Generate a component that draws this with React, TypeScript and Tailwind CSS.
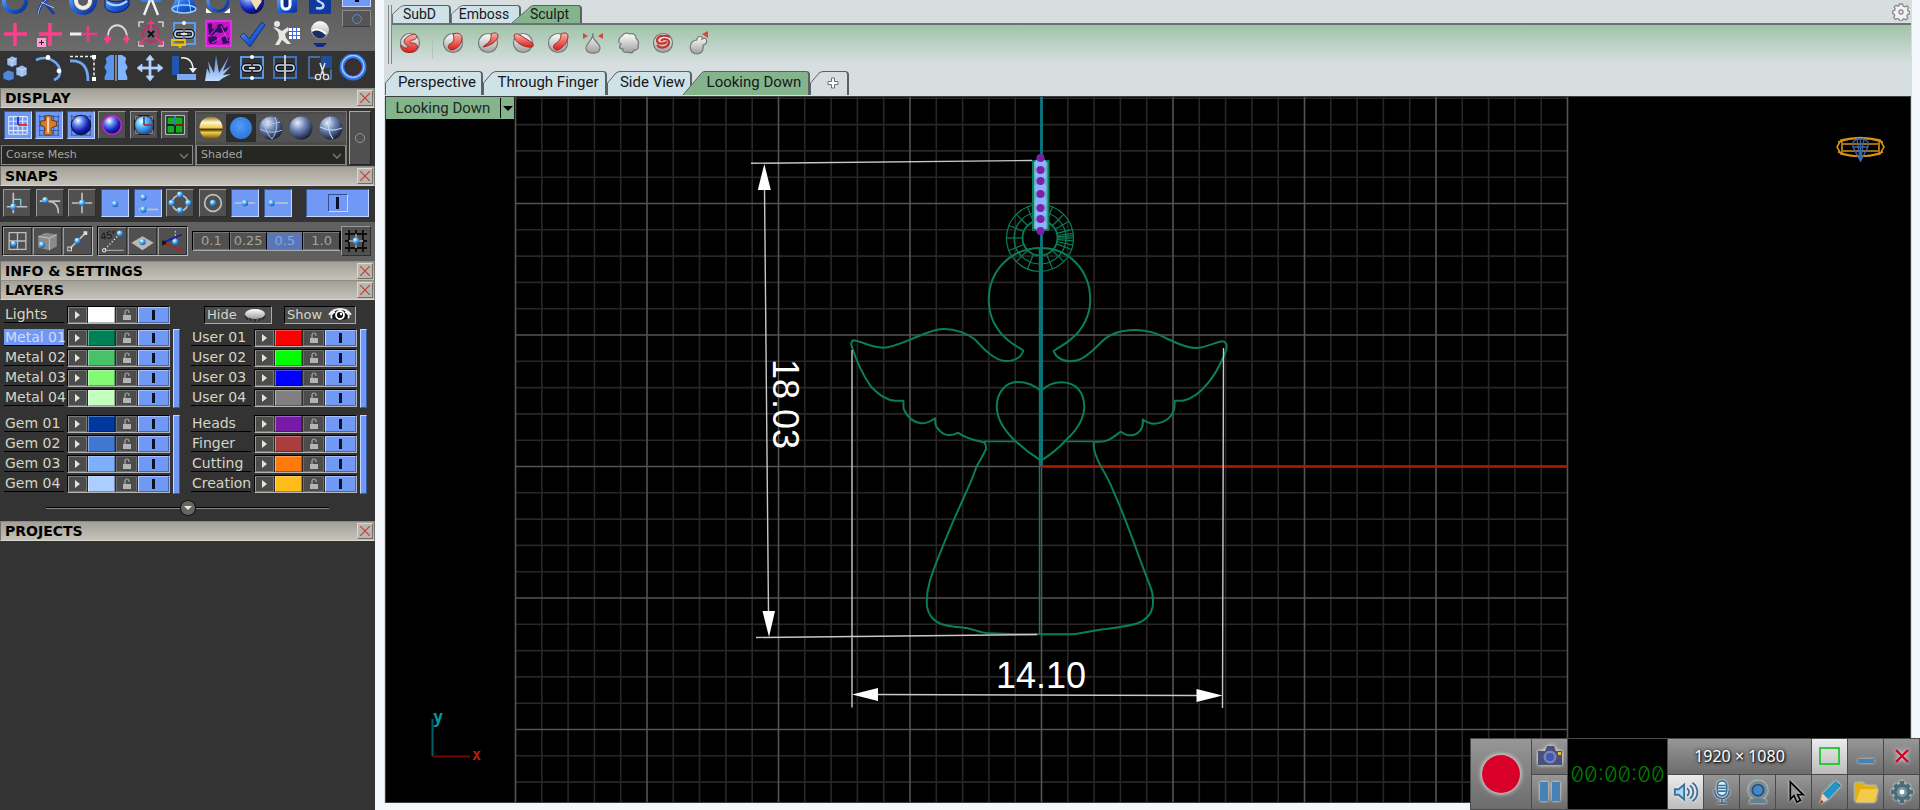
import type { ReactNode } from 'react';
import clsx from 'clsx';

const BALL = 'url(#ball)';

/* Shared gradients, referenced by id from every icon */
function Defs() {
  return (
    <svg className="absolute h-0 w-0" aria-hidden="true">
      <defs>
        <radialGradient id="ball" cx="35%" cy="30%" r="75%">
          <stop offset="0" stopColor="#fff" />
          <stop offset="0.4" stopColor="#58bdf5" />
          <stop offset="1" stopColor="#1450b8" />
        </radialGradient>
        <radialGradient id="navy" cx="35%" cy="28%" r="80%">
          <stop offset="0" stopColor="#fff" />
          <stop offset="0.3" stopColor="#6a8cf0" />
          <stop offset="0.65" stopColor="#1522b8" />
          <stop offset="1" stopColor="#02064a" />
        </radialGradient>
        <radialGradient id="steel" cx="35%" cy="28%" r="75%">
          <stop offset="0" stopColor="#e8f0ff" />
          <stop offset="0.45" stopColor="#6f86b4" />
          <stop offset="1" stopColor="#16203a" />
        </radialGradient>
        <radialGradient id="flat" cx="45%" cy="40%" r="65%">
          <stop offset="0" stopColor="#4f9dfa" />
          <stop offset="1" stopColor="#2c72d8" />
        </radialGradient>
        <linearGradient id="gold" x1="0" y1="0" x2="0" y2="1">
          <stop offset="0" stopColor="#8a6a10" />
          <stop offset="0.25" stopColor="#fff7d0" />
          <stop offset="0.5" stopColor="#f0c840" />
          <stop offset="0.55" stopColor="#3a2a04" />
          <stop offset="0.7" stopColor="#f4cd4c" />
          <stop offset="1" stopColor="#5c430a" />
        </linearGradient>
        <linearGradient id="blue" x1="0" y1="0" x2="1" y2="1">
          <stop offset="0" stopColor="#79b4ff" />
          <stop offset="0.5" stopColor="#1f63e0" />
          <stop offset="1" stopColor="#0a2a90" />
        </linearGradient>
        <linearGradient id="ice" x1="0" y1="0" x2="0" y2="1">
          <stop offset="0" stopColor="#4f86dc" />
          <stop offset="1" stopColor="#c4dcff" />
        </linearGradient>
        <linearGradient id="pearl" x1="0" y1="0" x2="0" y2="1">
          <stop offset="0" stopColor="#fff" />
          <stop offset="1" stopColor="#9e9e9e" />
        </linearGradient>
        <linearGradient id="red" x1="0" y1="0" x2="0" y2="1">
          <stop offset="0" stopColor="#f7b6b2" />
          <stop offset="1" stopColor="#e01c14" />
        </linearGradient>
      </defs>
    </svg>
  );
}

function Icon({ size = 'h-7 w-7', children }: { size?: string; children: ReactNode }) {
  return (
    <svg viewBox="0 0 28 28" fill="none" className={clsx('block shrink-0', size)} aria-hidden="true">
      {children}
    </svg>
  );
}

const Link = ({ gap = false }: { gap?: boolean }) => (
  <g stroke="#0c1420" strokeWidth="4">
    <path d="M13 11H8a3 3 0 0 0 0 6h5M15 11h5a3 3 0 0 1 0 6h-5" />
    <path d="M13 11H8a3 3 0 0 0 0 6h5M15 11h5a3 3 0 0 1 0 6h-5" stroke="#c9d6ea" strokeWidth="1.6" />
    {!gap && <path d="M11 14h6" stroke="#fff" strokeWidth="1.6" />}
  </g>
);

const topIcons: [string, ReactNode][] = [
  ['Circle', <circle cx="14" cy="13" r="11" stroke="url(#blue)" strokeWidth="4" />],
  ['Curve', <g><path d="M3 26C5 16 9 10 26 6M6 14l6 3 7 9M12 4l8 8" stroke="#1d3f98" strokeWidth="3" /><path d="M3 26C5 16 9 10 26 6M6 14l13 6" stroke="#a9c6ff" /></g>],
  ['Rings', <g><circle cx="14" cy="13" r="12" stroke="url(#blue)" strokeWidth="4" /><circle cx="14" cy="13" r="7" stroke="#eee" strokeWidth="4" /></g>],
  ['Band', <g><path d="M2 10v9c3 8 21 7 24-2v-9c-4 7-18 8-24 2z" fill="url(#blue)" stroke="#0a1f5a" /><path d="M4 14c5 5 14 4 20-1" stroke="#bcd8ff" strokeWidth="2" /></g>],
  ['Compass', <g><path d="M2 8h24l-2 6H4z" fill="#2f7fe8" /><path d="M13 12 7 27M15 12l6 15" stroke="#f3f3f3" strokeWidth="2.4" /></g>],
  ['Loft', <g><path d="M7 8h14l6 13c-3 6-23 6-26 0z" fill="url(#blue)" /><ellipse cx="14" cy="21" rx="12" ry="4" stroke="#8fd0ff" strokeWidth="1.5" /><path d="m10 8-3 16M18 8l3 16" stroke="#8fd0ff" /></g>],
  ['Scale', <g><circle cx="14" cy="13" r="10" stroke="url(#blue)" strokeWidth="3" /><path d="M2 20v5h6zM26 20v5h-6z" fill="#fff" /></g>],
  ['Gem', <g><circle cx="14" cy="14" r="12" fill="url(#navy)" /><path d="m12 11 6-3 6 5-6 9z" fill="#f5ddb0" /></g>],
  ['Cutter', <g><path d="M5 4h17l3 3v17l-4 1H5z" fill="url(#blue)" /><rect x="10" y="7" width="8" height="14" rx="4" stroke="#fff" strokeWidth="3" fill="#0c2a80" /></g>],
  ['Sizer', <g><path d="M3 4h17l5 3v19H3z" fill="#11389c" /><path d="M18 10c-7-4-9 2-4 4s5 8-4 6" stroke="#bed7ff" strokeWidth="2.4" /></g>],
];

const midIcons: [string, ReactNode][] = [
  ['Point', <path d="M14 3v23M3 14h23" stroke="#ff3d8c" strokeWidth="3.6" />],
  ['Add point', <g><path d="M15 3v23M4 14h23" stroke="#ff3d8c" strokeWidth="3.6" /><rect x="2" y="18" width="9" height="9" fill="#ff9fd4" /><path d="M6.5 20v5M4 22.5h5" stroke="#222" /></g>],
  ['Remove point', <g><path d="M1 14h12" stroke="#eee" strokeWidth="3" /><path d="M19 6v16M12 14h16" stroke="#e83d80" strokeWidth="2.6" /></g>],
  ['Arc points', <g><path d="M5 18C4 1 24 1 24 18" stroke="#ddd" strokeWidth="1.8" /><path d="M4.5 15v8M1 19h7M23.5 15v8M20 19h7" stroke="#ff3d8c" strokeWidth="2.4" /></g>],
  ['Explode', <g><path d="M2 7V2h5M21 2h5v5M2 21v5h5M26 21v5h-5" stroke="#ccc" strokeWidth="1.6" /><circle cx="14" cy="14" r="8" stroke="#c8286c" strokeWidth="2" /><path d="M14 14V4M14 14 4 22M14 14l10 8" stroke="#e83d80" strokeWidth="1.6" /><path d="M10 4l4-4 4 4zM2 20v5l5-1zM26 20v5l-5-1z" fill="#e83d80" /><path d="m11 11 6 6M17 11l-6 6" stroke="#111" strokeWidth="2" /></g>],
  ['Link history', <g><rect x="4" y="3" width="21" height="21" stroke="#5ba2ff" strokeWidth="1.8" /><Link /><path d="M2 20h13v5H2zM8 25l3 3" stroke="#f0c000" strokeWidth="1.8" /><circle cx="14" cy="3" r="2" fill="#fff" /></g>],
  ['Pattern', <g><rect x="2" y="1" width="25" height="25" fill="#c315c6" stroke="#f62cf6" strokeWidth="1.6" /><path d="M4 4c3-2 5 0 4 3s3 2 5-1 5-3 6 0 3 2 5 0l-1 5-6 2-5-1-3 3-4 1zM4 17c4 0 8-2 9 1s-1 6-5 6-3-3-4-7zM17 17c5-3 5 2 8 1v5l-6 1z" fill="#30105c" /><path d="m5 16 8-9M17 6l7 15M8 23l13-8" stroke="#f62cf6" /></g>],
  ['Check', <path d="m2 16 4-3 5 6L24 2l3 3-15 22z" fill="url(#blue)" stroke="#0c2668" strokeWidth="0.8" />],
  ['Render', <g><circle cx="5" cy="4" r="3" fill="#e8e6e0" /><path d="m1 7 4 1 5 3 6-4 1 3-4 4 1 4 5 6h-4l-5-4-3 5H3l4-7-1-6z" fill="#e8e6e0" /><rect x="17" y="8" width="11" height="11" fill="#fff" /><path d="M17 11.5h11M17 15.5h11M20.500 8v11M24.500 8v11" stroke="#3b6ad8" /></g>],
  ['Ring preview', <g><circle cx="14" cy="10" r="9" fill="url(#pearl)" /><path d="M6 12c3-4 9-3 14 3-3 5-11 5-14-3z" fill="#1d2c60" /><path d="M6 11c4-3 10-1 14 3" stroke="#fff" strokeWidth="2" /><path d="M7 23h14l-4 4h-6z" fill="#112a88" /></g>],
];

const editIcons: [string, ReactNode][] = [
  ['Boxes', <g stroke="#1c2c4c" strokeWidth="0.6"><path d="m6 5 5-3 5 2v7l-5 2-5-2zM15 14l6-3 5 3v7l-5 2-6-2z" fill="#9fbce8" /><path d="m2 19 5-3 6 2v7l-5 2-6-2z" fill="#5285d8" /><path d="m6 5 5 2 5-3M11 7v6M15 14l6 2 5-2M21 16v7" stroke="#dce9ff" /></g>],
  ['Arc', <g><path d="M1 6c12-6 24 3 24 12 0 3-1 6-6 8" stroke="#6ea8f2" strokeWidth="2.6" /><circle cx="13" cy="3.5" r="2.4" fill="#fff" /><circle cx="24" cy="17" r="2.4" fill="#fff" /></g>],
  ['Fillet', <g><path d="M1 7c14-1 18 8 18 20" stroke="#6ea8f2" strokeWidth="2.8" /><path d="M1 2.5h24V26" stroke="#eee" strokeWidth="1.5" strokeDasharray="3 2" /><rect x="23" y="1" width="4" height="4" fill="#fff" /><rect x="23" y="23" width="4" height="4" fill="#fff" /></g>],
  ['Mirror', <g><path d="M12 1 8 1 5 3c-3 2 1 4-1 7s-2 4 0 6-3 7-1 10h9z" fill="#5a94ec" /><path d="m16 1 4 0 3 2c3 2-1 4 1 7s2 4 0 6 3 7 1 10h-9z" fill="#7fb4ff" /><path d="M14 1v26" stroke="#aaa" strokeWidth="1.4" /></g>],
  ['Move', <path d="m14 1 4 5h-3v7h7v-3l5 4-5 4v-3h-7v7h3l-4 5-4-5h3v-7H6v3l-5-4 5-4v3h7V6h-3z" fill="#b8d6ff" stroke="#a6ccff" strokeWidth="0.8" />],
  ['Rotate', <g><path d="M2 2h7v19H2z" fill="#2056b0" /><path d="M7 20h19v6H7z" fill="#79aaf2" /><path d="M11 4c8-1 12 4 12 12" stroke="#eee" strokeWidth="1.5" /><path d="M19 14h8l-4 5z" fill="#eee" /></g>],
  ['Scatter', <path d="M1 27 3 14l3 6-2-13 6 12 2-18 3 18L25 2l-6 15 8-5-8 9 8-1-8 4-4 3z" fill="url(#ice)" />],
  ['Linked', <g><rect x="3" y="3" width="22" height="21" stroke="#5ba2ff" strokeWidth="1.8" /><Link /><circle cx="14" cy="3" r="2" fill="#fff" /><circle cx="14" cy="24" r="2" fill="#fff" /></g>],
  ['Unlinked', <g><rect x="3" y="3" width="22" height="21" stroke="#3f7ad0" strokeWidth="1.8" /><Link gap /><path d="M14 1v26" stroke="#fff" strokeWidth="1.4" /></g>],
  ['Trim', <g><path d="M16 2h11v12H16z" fill="#1f4d9a" /><path d="M15 3H4v21h8M26 15v10h-3" stroke="#4d83cc" strokeWidth="1.4" /><path d="m15 9 4 12M20 9l-4 12" stroke="#ddd" strokeWidth="1.6" /><circle cx="13" cy="23" r="2.6" stroke="#ddd" strokeWidth="1.4" /><circle cx="21" cy="23" r="2.6" stroke="#ddd" strokeWidth="1.4" /></g>],
  ['Torus', <g><circle cx="14" cy="13" r="11" stroke="#2f72e0" strokeWidth="5" /><circle cx="14" cy="12.5" r="11" stroke="#9cc6ff" strokeWidth="1.4" /><circle cx="14" cy="13" r="8" stroke="#5c1220" /></g>],
];

const gridLines = <path d="M3 5h22M3 10h22M3 15h22M3 20h22M3 25h22M4 3v22M9 3v22M14 3v22M19 3v22M24 3v22" stroke="#27488c" strokeWidth="0.8" />;

const displayIcons: { name: string; on?: boolean; art: ReactNode }[] = [
  { name: 'Grid', on: true, art: <g><path d="M4 5h20M4 10h20M4 15h20M4 20h20M4 24h20M4 5v19M9 5v19M14 5v19M19 5v19M24 5v19" stroke="#dfe6f8" strokeWidth="1.2" /><path d="M14 5v9" stroke="#1818e0" strokeWidth="1.8" /><path d="M14 14h10" stroke="#e01818" strokeWidth="1.8" /></g> },
  { name: 'Profile', on: true, art: <g>{gridLines}<path d="M10 4h7v5l5 1v5l-5 2-1 2 2 4-3 2h-4l-3-2 2-4-1-3-4-2v-4l5-1z" fill="#d87c2c" stroke="#6a3408" /><path d="M13 6v16" stroke="#ffdca8" strokeWidth="2" /></g> },
  { name: 'Shade on grid', on: true, art: <g>{gridLines}<circle cx="14" cy="14" r="10.5" fill="url(#navy)" stroke="#111" /></g> },
  { name: 'Shade', art: <circle cx="14" cy="14" r="10" fill="url(#navy)" stroke="#d21ad8" strokeWidth="1.6" /> },
  { name: 'Extents', art: <g><path d="M4 8V4h4M20 4h4v4M24 20v4h-4M8 24H4v-4" stroke="#ddd" strokeWidth="1.8" /><rect x="4" y="4" width="20" height="20" stroke="#111" /><circle cx="14" cy="14" r="9.5" fill="url(#ball)" /><path d="M14 14V5" stroke="#11306a" strokeWidth="1.4" /><path d="M14 14h9" stroke="#c41a1a" strokeWidth="1.6" /></g> },
  { name: 'Views', art: <g><rect x="4" y="4" width="20" height="20" fill="#1a1a1a" stroke="#ddd" /><path d="M6 6h7v7H6zM15 6h7v7h-7zM6 15h7v7H6zM15 15h7v7h-7z" fill="#10b020" /><path d="M14 14V4" stroke="#48a8ff" strokeWidth="1.4" /><path d="M14 14h10" stroke="#c41a1a" strokeWidth="1.4" /></g> },
];

const shadeIcons: { name: string; on?: boolean; art: ReactNode }[] = [
  { name: 'Gold', art: <circle cx="14" cy="14" r="11.5" fill="url(#gold)" /> },
  { name: 'Flat', on: true, art: <circle cx="14" cy="14" r="11" fill="url(#flat)" /> },
  { name: 'Wire', art: <g><circle cx="14" cy="14" r="11.5" fill="url(#steel)" /><path d="M3 15c8 4 15 4 22 1M9 4c-2 8 0 15 6 21M18 3c3 7 2 15-3 22M5 8c6 2 12 2 18 0" stroke="#b4c4e0" /></g> },
  { name: 'Steel', art: <circle cx="14" cy="14" r="11.5" fill="url(#steel)" /> },
  { name: 'Steel wire', art: <g><circle cx="14" cy="14" r="11.5" fill="url(#steel)" /><path d="M3 13c8 4 15 4 22 1M13 3c-3 8-2 15 3 22" stroke="#c8d6f0" strokeWidth="1.2" /></g> },
];

const dot = (x: number, y: number) => <circle key={`${x}-${y}`} cx={x} cy={y} r="3.4" fill={BALL} />;
const wire = { stroke: '#c0c0bc', strokeWidth: 1.8 };

const snapIcons: { name: string; on?: boolean; art: ReactNode }[] = [
  { name: 'Perp', art: <g><path d="M10 3v22M3 18h22" {...wire} /><path d="M10 10h8v7" stroke="#6fd8e8" strokeWidth="1.4" />{dot(10, 18)}</g> },
  { name: 'Tan', art: <g><path d="M3 12h22M10 12c9 0 13 5 13 13" {...wire} />{dot(9, 11)}</g> },
  { name: 'Int', art: <g><path d="M14 3v22M3 14h22" {...wire} />{dot(14, 14)}</g> },
  { name: 'Point', on: true, art: dot(14, 15) },
  { name: 'Knot', on: true, art: <g><path d="M4 21h21" {...wire} />{dot(9, 8)}{dot(9, 21)}</g> },
  { name: 'Quad', art: <g><circle cx="14" cy="14" r="8.5" {...wire} />{dot(14, 5)}{dot(14, 22)}{dot(5, 14)}{dot(23, 14)}</g> },
  { name: 'Center', art: <g><circle cx="14" cy="14" r="9" {...wire} />{dot(14, 14)}</g> },
  { name: 'Mid', on: true, art: <g><path d="M3 14h22" {...wire} />{dot(14, 14)}</g> },
  { name: 'End', on: true, art: <g><path d="M6 14h19" {...wire} />{dot(7, 14)}</g> },
];

const osnapA: [string, ReactNode][] = [
  ['Grid snap', <g><path d="M5 5h18v18H5zM14 5v18M5 14h18" {...wire} strokeWidth="1.4" />{dot(10, 17)}</g>],
  ['Solid snap', <g><path d="m4 9 8-4 12 2v13l-8 4-12-3z" fill="#8a8a88" /><path d="m4 9 12 2 8-4M16 11v13" stroke="#c8c8c4" />{dot(8, 18)}</g>],
  ['Line snap', <g><path d="M6 22 22 6" {...wire} /><rect x="3.5" y="20.5" width="4" height="4" stroke="#ddd" /><rect x="20.5" y="3.5" width="4" height="4" fill="#ddd" />{dot(14, 14)}</g>],
];

const osnapB: [string, ReactNode][] = [
  ['Angle snap', <g><text x="2" y="13" fontSize="11" fill="#111" transform="rotate(-10 2 13)" className="font-['Liberation_Sans']">45°</text><path d="M6 23 22 6" stroke="#ddd" strokeWidth="1.4" strokeDasharray="1.500 2" /><path d="M6 24h20" stroke="#bbb" />{dot(22, 6)}<circle cx="5" cy="24" r="1.8" stroke="#fff" /></g>],
  ['Planar', <g><path d="m2 16 12-7 12 7-12 8z" fill="#b8b8b4" />{dot(14, 15)}</g>],
  ['Project', <g><path d="M17 3v9" stroke="#ddd" strokeDasharray="2 1.5" /><path d="m3 16 21-9" stroke="#1520b0" strokeWidth="2" /><path d="m3 16 21 8" stroke="#c81414" strokeWidth="2" strokeDasharray="3 1" /><path d="M3 13v6l5-3z" fill="#111" />{dot(17, 15)}</g>],
];

function IconButton({ name, on, className, children }: { name: string; on?: boolean; className?: string; children: ReactNode }) {
  return (
    <button
      aria-label={name}
      aria-pressed={!!on}
      className={clsx(
        'shrink-0 border',
        on ? 'border-b-[#c5d6ff] border-r-[#c5d6ff] border-l-[#3c5a9c] border-t-[#3c5a9c] bg-[#7099f6]' : 'border-b-[#2e2e2e] border-r-[#2e2e2e] border-l-[#9a9a9a] border-t-[#9a9a9a] bg-[#505050]',
        className,
      )}
    >
      {children}
    </button>
  );
}

function SectionHeader({ title }: { title: string }) {
  return (
    <div className="flex h-5 shrink-0 items-center justify-between border border-l-[#74736c] border-t-[#8e8d84] border-r-[#74736c] border-b-[#d8d7ce] bg-linear-to-b from-[#a3a197] to-[#c4c2b9] pl-1 pr-px">
      <h2 className="font-['DejaVu_Sans'] text-sm/4 font-bold text-black">{title}</h2>
      <button aria-label={`Close ${title}`} className="flex h-4 w-4 items-center justify-center border border-b-[#6e6d66] border-r-[#6e6d66] border-l-[#dcdbd2] border-t-[#dcdbd2] bg-[#b9b7ad]">
        <svg viewBox="0 0 10 10" className="h-2.5 w-2.5" stroke="#c43c3c" strokeWidth="1.2"><path d="m0 0 10 10M10 0 0 10" /></svg>
      </button>
    </div>
  );
}

function Dropdown({ label, value }: { label: string; value: string }) {
  return (
    <div className="relative h-5">
      <select aria-label={label} className="block h-5 w-full appearance-none border border-[#8a8a86] border-t-[#777] bg-[#262622] pl-1 font-['DejaVu_Sans'] text-[11px] text-[#a5a5a0]">
        <option>{value}</option>
      </select>
      <svg viewBox="0 0 10 6" fill="none" className="pointer-events-none absolute right-1 top-2 h-1.5 w-2.5" stroke="#777" strokeWidth="1.5"><path d="m1 1 4 4 4-4" /></svg>
    </div>
  );
}

type Layer = { name: string; color: string };

const leftGroups: Layer[][] = [
  [
    { name: 'Metal 01', color: '#008055' },
    { name: 'Metal 02', color: '#47c268' },
    { name: 'Metal 03', color: '#83fa76' },
    { name: 'Metal 04', color: '#c3ffbd' },
  ],
  [
    { name: 'Gem 01', color: '#00389f' },
    { name: 'Gem 02', color: '#4178cf' },
    { name: 'Gem 03', color: '#7db0f8' },
    { name: 'Gem 04', color: '#accdff' },
  ],
];

const rightGroups: Layer[][] = [
  [
    { name: 'User 01', color: '#ff0000' },
    { name: 'User 02', color: '#00ff00' },
    { name: 'User 03', color: '#0000ff' },
    { name: 'User 04', color: '#808080' },
  ],
  [
    { name: 'Heads', color: '#781aa8' },
    { name: 'Finger', color: '#aa3e3e' },
    { name: 'Cutting', color: '#ff7a0a' },
    { name: 'Creation', color: '#ffba1c' },
  ],
];

function LayerRow({ layer, active }: { layer: Layer; active?: boolean }) {
  return (
    <div className="flex h-5 items-start">
      <button className={clsx("mr-[3px] h-[17px] w-[60px] whitespace-nowrap border-b border-black pl-px text-left font-['DejaVu_Sans'] text-sm/4", active ? 'bg-[#7099f6] text-[#cfdcf6]' : 'text-[#d6d5c6]')}>
        {layer.name}
      </button>
      <div className="flex h-[18px] w-[103px] gap-px border border-black border-b-[#b5b5b5] border-r-[#b5b5b5] bg-[#2a2a2a]">
        <button aria-label={`${layer.name} material`} className="flex w-[19px] items-center justify-center border border-[#777] border-l-[#999] bg-[#4c4c4c]">
          <svg viewBox="0 0 5 8" className="h-2 w-[5px]"><path d="M0 0v8l5-4z" fill="#e8e4d4" /></svg>
        </button>
        <button aria-label={`${layer.name} colour`} className="w-[27px] border border-black/30 border-l-white/40 border-t-white/30" style={{ backgroundColor: layer.color }} />
        <button aria-label={`Lock ${layer.name}`} className="flex w-[21px] items-center justify-center border border-[#6e6e6e] bg-[#4c4c4c]">
          <svg viewBox="0 0 10 12" className="h-3 w-2.5"><path d="M3 6V3a2 2 0 0 1 4 0v1" fill="none" stroke="#aaa" strokeWidth="1.2" /><path d="M1 6h8v5H1z" fill="#b4b4b4" /></svg>
        </button>
        <button aria-label={`Show ${layer.name}`} aria-pressed="true" className="flex flex-1 items-center justify-center border border-[#4a68ac] border-l-[#c9d9ff] border-t-[#a9c2ff] bg-[#7099f6]">
          <span className="h-2.5 w-[3px] bg-[#0c1226]" />
        </button>
      </div>
    </div>
  );
}

function LayerGroup({ layers, active }: { layers: Layer[]; active?: string }) {
  return (
    <div className="flex gap-[3px]">
      <div>
        {layers.map((l) => <LayerRow key={l.name} layer={l} active={l.name === active} />)}
      </div>
      <button aria-label="Toggle group" className="h-[79px] w-[7px] border border-l-[#c5d6ff] border-t-[#c5d6ff] border-b-[#3c5a9c] border-r-[#3c5a9c] bg-[#7099f6]" />
    </div>
  );
}

function Sidebar() {
  return (
    <aside className="flex w-[375px] shrink-0 flex-col overflow-hidden bg-[#333]">
      <div className="flex h-[51px] shrink-0 overflow-hidden bg-linear-to-b from-[#5c5c5c] to-[#6b6b6b]">
        <div className="w-[334px] pl-px">
          <div className="flex h-[18px] items-end justify-between pb-0.5">
            {topIcons.map(([name, art]) => <button key={name} aria-label={name}><Icon>{art}</Icon></button>)}
          </div>
          <div className="flex h-8 items-center justify-between">
            {midIcons.map(([name, art]) => <button key={name} aria-label={name}><Icon>{art}</Icon></button>)}
          </div>
        </div>
        <div className="ml-2 flex w-[29px] flex-col gap-[3px]">
          <button aria-label="Pin" className="flex h-[7px] justify-center border border-t-0 border-[#c5d6ff] bg-[#7099f6]"><span className="h-0.5 w-1 bg-black" /></button>
          <button aria-label="Dock" className="flex h-[17px] items-center justify-center border border-[#8c8c8c] border-b-[#3a3a3a] bg-[#555]"><span className="h-2.5 w-2.5 rounded-full border border-[#5e8ccc]" /></button>
        </div>
      </div>
      <div className="flex h-[37px] shrink-0 items-start justify-between pl-px pr-2 pt-[3px]">
        {editIcons.map(([name, art]) => <button key={name} aria-label={name}><Icon>{art}</Icon></button>)}
      </div>

      <SectionHeader title="DISPLAY" />
      <div className="flex h-[58px] shrink-0 gap-0.5 pl-px pr-1 pt-[3px]">
        <div className="flex w-[192px] flex-col justify-between pb-px">
          <div className="flex justify-between pl-[3px] pr-1">
            {displayIcons.map((d) => <IconButton key={d.name} name={d.name} on={d.on} className="h-7 w-7"><Icon size="h-[26px] w-[26px]">{d.art}</Icon></IconButton>)}
          </div>
          <Dropdown label="Mesh quality" value="Coarse Mesh" />
        </div>
        <div className="flex w-[152px] flex-col justify-between border border-b-0 border-[#777] bg-[#4a4a4a] pb-px">
          <div className="flex justify-between pt-0.5">
            {shadeIcons.map((d) => <button key={d.name} aria-label={d.name} className={clsx('h-7 w-[30px] pl-px', d.on ? 'bg-[#2c2c2c]' : 'bg-[#525252]')}><Icon>{d.art}</Icon></button>)}
          </div>
          <Dropdown label="Display mode" value="Shaded" />
        </div>
        <button aria-label="Display options" className="mb-px flex w-[22px] items-center justify-center border border-l-[#aaa] border-t-[#aaa] border-b-[#222] border-r-[#222] bg-[#505050]">
          <span className="h-2.5 w-2.5 rounded-full border border-[#999]" />
        </button>
      </div>

      <SectionHeader title="SNAPS" />
      <div className="flex h-9 shrink-0 items-center justify-between pb-0.5 pl-[3px] pr-1.5">
        <div className="flex w-[289px] justify-between">
          {snapIcons.map((d) => <IconButton key={d.name} name={d.name} on={d.on} className="h-7 w-7"><Icon size="h-[26px] w-[26px]">{d.art}</Icon></IconButton>)}
        </div>
        <IconButton name="Snaps on" on className="flex h-7 w-[63px] items-center justify-center">
          <span className="flex h-[18px] w-5 items-center justify-center border border-[#35508c] border-b-[#c5d6ff] border-r-[#c5d6ff]"><span className="h-3 w-[3px] bg-[#0c1226]" /></span>
        </IconButton>
      </div>
      <div className="flex h-[39px] shrink-0 items-center gap-1 bg-[#606060] pb-0.5 pl-0.5">
        <div className="flex gap-px border border-black border-b-[#bbb] border-r-[#bbb]">
          {osnapA.map(([name, art]) => <IconButton key={name} name={name} className="h-7 w-[29px]"><Icon size="h-[26px] w-[27px]">{art}</Icon></IconButton>)}
        </div>
        <div className="flex gap-px border border-black border-b-[#bbb] border-r-[#bbb]">
          {osnapB.map(([name, art]) => <IconButton key={name} name={name} className="h-7 w-[29px]"><Icon size="h-[26px] w-[27px]">{art}</Icon></IconButton>)}
        </div>
        <div className="flex flex-1 items-center pr-1">
          <div className="grid h-5 flex-1 grid-cols-4 border border-black border-b-[#aaa] font-['DejaVu_Sans'] text-[13px]/4 text-[#a5a498]">
            {['0.1', '0.25', '0.5', '1.0'].map((v) => (
              <button key={v} className={clsx('border border-[#777] border-r-black', v === '0.5' ? 'bg-[#5876b8] text-[#8ba4dc]' : 'bg-[#505050]')}>{v}</button>
            ))}
          </div>
          <IconButton name="Grid step" className="h-[30px] w-[30px]">
            <Icon><path d="M7 3v22M14 3v22M21 3v22M3 7h22M3 14h22M3 21h22" stroke="#0d0d0d" strokeWidth="1.8" /><path d="M14 7v14M7 14h14" stroke="#bbb" strokeWidth="1.4" />{dot(14, 14)}</Icon>
          </IconButton>
        </div>
      </div>

      <div className="flex shrink-0 flex-col -space-y-px">
        <SectionHeader title="INFO & SETTINGS" />
        <SectionHeader title="LAYERS" />
      </div>
      <div className="shrink-0 pl-1 pt-1.5">
        <div className="flex h-[23px] items-start justify-between pr-[19px]">
          <LayerRow layer={{ name: 'Lights', color: '#ffffff' }} />
          <div className="flex gap-3 font-['DejaVu_Sans'] text-[13px]/4 text-[#d6d5c6]">
            <button className="flex h-[18px] w-[68px] items-center gap-1.5 border border-[#aaa] border-l-black border-t-black bg-[#4c4c4c] pl-0.5">
              Hide
              <svg viewBox="0 0 24 14" className="h-3.5 w-6"><path d="m2 8 3 4M7 10l1 3M12 11v3M17 10l-1 3M22 8l-3 4" stroke="#111" /><ellipse cx="12" cy="6" rx="10" ry="5" fill="url(#pearl)" /></svg>
            </button>
            <button className="flex h-[18px] w-[72px] items-center gap-1.5 border border-[#aaa] border-l-black border-t-black bg-[#4c4c4c] pl-0.5">
              Show
              <svg viewBox="0 0 24 14" className="h-3.5 w-6"><path d="M1 7c5-8 17-8 22 0-5 7-17 7-22 0z" fill="#111" /><path d="M1 7c5-8 17-8 22 0M4 10C2 8 4 5 7 4M20 10c2-2 0-5-3-6" fill="none" stroke="#eee" strokeWidth="1.8" /><circle cx="12" cy="7" r="4" fill="#111" stroke="#fff" strokeWidth="1.8" /><circle cx="13" cy="6" r="1.2" fill="#fff" /></svg>
            </button>
          </div>
        </div>
        <div className="flex gap-[11px]">
          <div className="flex flex-col gap-1.5">
            {leftGroups.map((g) => <LayerGroup key={g[0].name} layers={g} active="Metal 01" />)}
          </div>
          <div className="flex flex-col gap-1.5">
            {rightGroups.map((g) => <LayerGroup key={g[0].name} layers={g} />)}
          </div>
        </div>
        <div className="flex h-[26px] items-center pl-[42px] pr-[46px]">
          <div className="h-0.5 flex-1 border-b border-[#888] bg-black" />
          <button aria-label="Collapse layers" className="flex h-4 w-4 items-center justify-center rounded-full border border-[#111] bg-[#666]">
            <svg viewBox="0 0 8 4" className="h-1 w-2"><path d="M0 0h8L4 4z" fill="#eee8d4" /></svg>
          </button>
          <div className="h-0.5 flex-1 border-b border-[#888] bg-black" />
        </div>
      </div>
      <SectionHeader title="PROJECTS" />
    </aside>
  );
}

/* A tab with a slanted left edge; the active one runs over its neighbour */
function Tab({ label, active, className, children }: { label: string; active?: boolean; className: string; children?: ReactNode }) {
  const fill = active ? '#84b48c' : children ? '#d6dee0' : '#cfe2e8';
  const edge = active ? 'M-9 24 10 1.500Q11 .5 14 .5' : 'M.5 24V12L9 2Q11 .5 14 .5';
  return (
    <button role="tab" aria-selected={!!active} aria-label={label} className={clsx('relative flex shrink-0 items-center justify-center', className, active && 'z-10')}>
      <span className={clsx('absolute inset-y-0 left-3 right-0 rounded-tr border-r-2 border-t border-[#5c6264]', active ? 'bg-[#84b48c]' : children ? 'bg-[#d6dee0]' : 'bg-[#cfe2e8]')} />
      <svg viewBox="0 0 14 24" preserveAspectRatio="none" className="absolute left-0 top-0 h-full w-3.5 overflow-visible" aria-hidden="true">
        <path d={`${edge}V24z`} fill={fill} />
        <path d={edge} fill="none" stroke="#5c6264" />
      </svg>
      <span className="relative text-[#16181c]">{children ?? label}</span>
    </button>
  );
}

const ring = <circle cx="12" cy="12" r="9.5" fill="url(#pearl)" stroke="#777" strokeWidth="1.2" />;
const redStroke = { fill: 'url(#red)', stroke: '#8c2824', strokeWidth: 0.9 };

const sculptTools: [string, ReactNode][] = [
  ['Grab', <g>{ring}<path d="M17 3c3 2 2 5-2 6-5 1-4 3 0 3 6 1 6 7 0 9C7 23 2 19 3 14c4 5 9 3 6 0-5-2-4-9 8-11z" {...redStroke} /></g>],
  ['Inflate', <g>{ring}<path d="M12 3c5-2 9 0 9 4 0 6-5 11-10 12-4 0-5-5-2-6s5-4 3-10z" {...redStroke} /></g>],
  ['Crease', <g>{ring}<path d="M15 3c4-2 7-1 7 2 0 5-8 10-15 11 4-4 9-5 8-13z" {...redStroke} /></g>],
  ['Flatten', <g>{ring}<path d="M3 4c2-2 4-1 6 0l11 7c3 2 3 4 1 5-7 1-18-4-18-12z" {...redStroke} /></g>],
  ['Smooth', <g>{ring}<path d="M15 3c4-2 7-1 7 2 0 6-5 12-10 14-4 1-6-4-3-6s6-4 6-10z" {...redStroke} /></g>],
  ['Pinch', <g><path d="M12 2v3c0 5 7 7 7 12 0 7-14 7-14 0C5 12 12 10 12 2z" fill="url(#pearl)" stroke="#777" strokeWidth="1.2" /><path d="m2 2 5 3-5 3zM22 2l-5 3 5 3z" fill="#d84840" /></g>],
  ['Noise', <path d="M6 5c2-4 6-3 8-2 3-1 6 1 6 4 3 3 3 5 2 7 1 3-1 6-4 5-1 4-5 3-6 2-3 1-6 0-5-3-4 0-4-3-2-5-4-1-2-7 1-8z" fill="url(#pearl)" stroke="#777" strokeWidth="1.2" />],
  ['Twist', <g>{ring}<path d="M19 6c-5-2-12-2-13 3 0 5 7 4 10 2M6 14c4 5 12 2 12-3 0-3-6-4-8-1" fill="none" stroke="#c2342c" strokeWidth="2.2" /></g>],
  ['Pull', <g><path d="M11 9c0-5 7-4 5-1 6-3 6 5 1 6 1 7-3 9-6 9-9 0-9-14 0-14z" fill="url(#pearl)" stroke="#777" strokeWidth="1.2" /><path d="m16 3 6-3v7z" fill="#d84840" /></g>],
];

function Ribbon() {
  return (
    <div className="flex h-[66px] shrink-0 pl-[3px] pt-[5px]">
      <div className="h-[59px] w-1 shrink-0 border-x border-[#7e8688]" />
      <div className="flex min-w-0 flex-1 flex-col">
        <div className="flex h-[18px] items-end justify-between pr-px">
          <div role="tablist" className="flex font-[Roboto] text-sm/4">
            <Tab label="SubD" className="h-[18px] w-[59px] pr-1" />
            <Tab label="Emboss" className="h-[18px] w-[70px] pr-1" />
            <Tab label="Sculpt" active className="h-[18px] w-[61px] pr-1" />
          </div>
          <button aria-label="Toolbar options" className="mb-0.5">
            <svg viewBox="0 0 18 18" fill="none" stroke="#8a8a8a" strokeWidth="1.3" className="h-[18px] w-[18px]"><path d="M7.5 1h3l.5 2 2 .8 2-1 1.500 2-1 2 .5 1.200 1.500.5v2.500l-2 .5-.7 1.500 1 2-2 1.800-2-1-1 .5-.8 1.700H7.800l-.8-2-1.500-.5-2 1-1.800-2 1-1.800-.5-1.500-1.500-.7V8l2-.7.5-1.500-1-2 1.800-1.600 2 1 1-.5z" fill="#f2f2f2" /><circle cx="9" cy="9" r="2" /></svg>
          </button>
        </div>
        <div className="flex h-10 items-start border-t-2 border-[#6d7375] bg-linear-to-b from-[#9fc4a8] to-[#d6dee0] pl-1.5 pt-1.5">
          <button aria-label={sculptTools[0][0]}><svg viewBox="0 0 24 24" className="h-6 w-6">{sculptTools[0][1]}</svg></button>
          <div className="ml-2.5 mr-2 h-7 w-px bg-[#b3c4b8]" />
          <div className="flex gap-[11px]">
            {sculptTools.slice(1).map(([name, art]) => <button key={name} aria-label={name}><svg viewBox="0 0 24 24" className="h-6 w-6">{art}</svg></button>)}
          </div>
        </div>
      </div>
    </div>
  );
}

/* World grid: origin at 1040.5 x 466.5, one unit is 26.3 */
const STEP = 26.3;
const OX = 1040.5;
const OY = 466.5;
const columns = Array.from({ length: 41 }, (_, i) => i - 20);
const rows = Array.from({ length: 27 }, (_, i) => i - 14);

function Grid() {
  return (
    <g strokeWidth="1.600">
      {columns.map((i) => i % 5 !== 0 && <path key={`c${i}`} d={`M${OX + i * STEP} 97V803`} stroke="#272727" />)}
      {rows.map((i) => i % 5 !== 0 && <path key={`r${i}`} d={`M${OX - 20 * STEP} ${OY + i * STEP}H${OX + 20 * STEP}`} stroke="#272727" />)}
      {columns.map((i) => i % 5 === 0 && <path key={`C${i}`} d={`M${OX + i * STEP} 97V803`} stroke="#545454" />)}
      {rows.map((i) => i % 5 === 0 && <path key={`R${i}`} d={`M${OX - 20 * STEP} ${OY + i * STEP}H${OX + 20 * STEP}`} stroke="#545454" />)}
      <path d="M1040 466.500h526.500" stroke="#b01505" strokeWidth="2.4" />
      <path d="M1040.5 97v369" stroke="#00818c" strokeWidth="2.6" />
    </g>
  );
}

const spokes = [20, 45, 68, 90, 112, 135, 158, 180, 202, 225, 248, 292, 315, 330, 345, 352, 356, 0, 5, 12];
const beads = [158, 170, 181, 194, 208, 219, 231];

function Angel() {
  return (
    <g fill="none" stroke="#0a7f56" strokeWidth="2" strokeLinejoin="round">
      <path d="M1040 248C1010 248 988 270 987.700 300C988 320 998 333 1008 341C1015 347 1022 349 1022.300 351C1020 357 1014 361 1005 361C998 361 993 357 986.700 352.300C981 348 978 343 973.300 339C967 334 955 329 943.300 329C933 329 926 333 918 336C905 341 892 348 881.700 347.700C870 347 862 342 852.700 340.300Q850 341 850.300 345C855 360 861 374 870 386.700C877 394 886 401 895 400.700H902.300C903 403 902 405 902.700 409C906 417 912 422 920 423.300C926 424 930 421 934 418.300C934 421 934 423 935 426C938 431 942 435 948.300 435.300C952 435 955 434 957.300 432.700C963 438 973 440 983.300 442.500Q985.500 445 985 449C981 458 977 463 975 468C971 480 967 488 961.700 500C955 515 948 530 941.700 546.700C935 563 930 576 928.300 583.300Q925 595 926 606.700C927 614 932 621 940 624C950 627 958 627 966.700 628.300C975 630 980 633 988.300 633.300C1005 634 1020 634.300 1038 634.300H1068C1080 634 1092 630 1105 629C1118 627 1129 626 1136.700 623.300C1145 620 1150 615 1151.700 606.700Q1153 595 1149.300 586.700C1145 575 1140 563 1135 548.300C1127 527 1121 510 1113.300 493.300C1108 480 1104 473 1100 466.700C1096 459 1092 450 1092.700 444Q1093 441.700 1095 441.700C1108 443 1113 436 1120 431.700C1123 434 1126 435.500 1129.300 435.300C1137 435 1143 429 1141.700 419.500C1145 422 1149 423.700 1153.300 423.700C1165 423 1172 416 1173.300 408C1174 405 1173 403 1174 400.700H1181.700C1190 399 1199 393 1206.700 383.300C1214 375 1219 365 1223.300 355Q1227 347 1225 343.500Q1223 340.500 1220 341.500C1212 343 1204 348 1195 348C1184 348 1176 343 1166.700 339C1157 334 1148 330 1135 330C1124 330 1116 332 1110 335C1104 338 1101 341 1096.700 345.700C1091 351 1087 355 1080 359Q1074 361.500 1068.300 361.300C1060 361 1054 356 1052.700 351C1058 347 1065 344 1070 339C1082 330 1089 315 1089.300 300C1089 270 1068 248 1040 248Z" />
      <path d="M1040 391C1032 384 1024 382 1016.700 382C1003 382 996 394 995.700 406.700C996 418 1003 430 1013.300 440C1022 448 1031 455 1040 460.700C1049 455 1057 449 1065 440C1076 430 1083 418 1083.300 406.700C1083 393 1076 383 1061.700 382.300C1053 382 1046 385 1040 391Z" />
      <path d="M983 441.500h31M1065 441.500h28M1038.500 248v386" strokeWidth="1.4" />
      <g strokeWidth="1.2">
        <circle cx="1039" cy="238" r="33.5" />
        <circle cx="1039" cy="238" r="26" />
        <circle cx="1039" cy="238" r="17.5" strokeWidth="1.8" />
        {spokes.map((a) => <path key={a} d="M1057 238h15.500" transform={`rotate(${a} 1039 238)`} />)}
      </g>
      <path d="M1032 161h15.500v69H1032z" fill="#5fb0b8" />
      <path d="M1039.5 164v66" stroke="#8bb4ff" strokeWidth="8" />
      {beads.slice(1).map((y) => <circle key={y} cx="1039.5" cy={y - 6} r="6" fill="#8bb4ff" stroke="none" />)}
      {beads.map((y) => <circle key={y} cx="1039.5" cy={y} r="4" fill="#7d1fa8" stroke="none" />)}
    </g>
  );
}

function Dimensions() {
  return (
    <g stroke="#c8c8c8" strokeWidth="1.4">
      <path d="M750 163.300 1031 160.500M755 637.500l281-3M763.500 188l4 425M851 350v357.500M1222.500 348l-1 360M875 694.500l322 1" />
      <g fill="#fff" stroke="none">
        <path d="m763.300 164 6.500 26h-13zM768 637l6-26h-12.500zM851 694.500l26-6.500v13zM1221.500 695.500l-26-6.500v13z" />
        <text x="1040" y="688" fontSize="36" textAnchor="middle" className="font-['Liberation_Sans']">14.10</text>
        <text fontSize="36" textAnchor="middle" transform="translate(772 404) rotate(90)" className="font-['Liberation_Sans']">18.03</text>
      </g>
    </g>
  );
}

function Viewport() {
  return (
    <section className="relative min-h-0 flex-1 overflow-hidden border border-[#3c3e40] bg-black">
      <svg viewBox="385 97 1524 706" preserveAspectRatio="xMinYMin slice" className="block h-full w-full">
        <Grid />
        <Angel />
        <Dimensions />
        <path d="M431.5 719v37" stroke="#006068" strokeWidth="2" />
        <path d="M431.5 756.500H469" stroke="#6a0a04" strokeWidth="2" />
        <text x="432" y="723" fontSize="17" fontWeight="bold" fill="#009aa4" className="font-['DejaVu_Sans_Mono']">y</text>
        <text x="471" y="760" fontSize="15" fontWeight="bold" fill="#b81c08" className="font-['DejaVu_Sans_Mono']">x</text>
        <g fill="none" stroke="#d89210" strokeWidth="1.6">
          <path d="M1840 140q19-5 39 0l4 7-4 7q-20 5-39 0l-4-7zM1841 142v11M1878 142v11M1842 144h35M1842 151h35M1837 142q22-7 45 0M1837 152q22 8 45 0" />
          <path d="m1852 142 4-3h7l4 3v5l-7.500 14-7.500-14zM1852 147h15M1856 139l3.500 22 3.500-22M1859.500 139v22" stroke="#3a68b4" strokeWidth="1.3" />
        </g>
      </svg>
      <div className="absolute left-0 top-0 flex h-[22px] w-[128px] items-center bg-[#84b48c] font-[Roboto] text-[15px]">
        <span className="flex-1 text-center text-[#20281f]">Looking Down</span>
        <button aria-label="Viewport menu" className="flex h-5 w-3.5 items-center justify-center border-l border-black">
          <svg viewBox="0 0 10 5" className="h-[5px] w-2.5"><path d="M0 0h10L5 5z" /></svg>
        </button>
      </div>
    </section>
  );
}

const recorderTools: { name: string; on?: boolean; art: ReactNode }[] = [
  { name: 'Speaker', on: true, art: <g stroke="#3d7096" strokeWidth="2"><path d="M2 11h4l6-5v16l-6-5H2z" fill="#a8d8f0" /><path d="M15 10c3 2 3 6 0 8M18 7c5 3 5 11 0 14M21 4c7 5 7 15 0 20" /></g> },
  { name: 'Microphone', art: <g stroke="#3d7096" strokeWidth="1.8"><rect x="9" y="2" width="10" height="16" rx="5" fill="#d8eef8" /><path d="M10 7h8M10 10h8M10 13h8M6 12c0 12 16 12 16 0M14 21v4M9 26h10" /></g> },
  { name: 'Webcam', art: <g><circle cx="14" cy="12" r="10.5" fill="#75909c" /><circle cx="14" cy="12" r="7" fill="#38505e" /><circle cx="14" cy="12" r="5" fill="#3e88d4" /><path d="M7 21h14l3 5H4z" fill="#64808c" /></g> },
  { name: 'Pointer', art: <path d="M10 3v19l4-4 3 7 4-2-3-6h6z" fill="#999" stroke="#000" strokeWidth="1.8" /> },
  { name: 'Pencil', art: <g><path d="M20 2l6 5L12 22l-6-6z" fill="#2196c4" /><path d="m22 5 3 3" stroke="#156c94" /><path d="m6 16 6 6-8 4z" fill="#f4cfae" /><path d="m5 22 2 3-4 2z" fill="#a03028" /></g> },
  { name: 'Folder', art: <g><path d="M2 4h9l2 3h12v17H2z" fill="#e4b010" /><path d="M8 11h19l-4 14H3z" fill="#f0cc48" /></g> },
  { name: 'Settings', art: <g><circle cx="14" cy="14" r="9" fill="#4d6c7a" /><path d="M14 2v24M2 14h24M6 6l16 16M22 6 6 22" stroke="#4d6c7a" strokeWidth="5" /><circle cx="14" cy="14" r="5.5" fill="#7c98a4" /><circle cx="14" cy="14" r="2.6" fill="#fff" /></g> },
];

const cell = 'flex items-center justify-center bg-linear-to-b from-[#979797] to-[#6c6c6c]';
const lit = 'flex items-center justify-center bg-linear-to-b from-[#ececec] to-[#bcbcbc]';

function Recorder() {
  return (
    <div className="fixed bottom-0 right-0 flex h-[72px] gap-px border border-[#4a4a4a] bg-[#4a4a4a]">
      <button aria-label="Record" className={clsx(cell, 'w-[60px]')}>
        <span className="h-[38px] w-[38px] rounded-full bg-[#d80028] shadow-[0_0_4px_1px_#ddd]" />
      </button>
      <div className="grid w-[35px] grid-rows-2 gap-px">
        <button aria-label="Screenshot" className={cell}>
          <Icon><g className="drop-shadow-[0_0_2px_#fff]"><path d="M2 9h7l2-5h7l2 5h6v14H2z" fill="#4a5078" /><circle cx="14" cy="15" r="6.5" fill="#7a84b0" /><circle cx="14" cy="15" r="4" fill="#3c58b8" /><path d="M22 10h3v3h-3z" fill="#e8c040" /></g></Icon>
        </button>
        <button aria-label="Pause" className={clsx(cell, 'gap-1')}>
          <span className="h-[19px] w-2 bg-[#4682b8] shadow-[0_0_3px_#fff]" />
          <span className="h-[19px] w-2 bg-[#4682b8] shadow-[0_0_3px_#fff]" />
        </button>
      </div>
      <output className="flex w-[99px] items-center justify-center bg-black font-[Inter] text-[22px] font-light text-[#007c00] slashed-zero">00:00:00</output>
      <div className="grid w-[251px] grid-cols-7 grid-rows-2 gap-px">
        <div className={clsx(cell, "col-span-4 font-['Noto_Sans'] text-base text-white [text-shadow:1px_1px_2px_#000,0_0_4px_#000]")}>1920 × 1080</div>
        <button aria-label="Region" className={lit}><span className="h-[18px] w-[21px] border-2 border-[#2cc840]" /></button>
        <button aria-label="Minimize" className={cell}><span className="mt-2.5 h-1 w-4 bg-[#4682b8] shadow-[0_0_3px_#ddd]" /></button>
        <button aria-label="Close" className={cell}>
          <svg viewBox="0 0 14 14" className="h-3.5 w-3.5 drop-shadow-[0_0_2px_#fff]" stroke="#d80028" strokeWidth="2.4"><path d="m1 1 12 12M13 1 1 13" /></svg>
        </button>
        {recorderTools.map((t) => (
          <button key={t.name} aria-label={t.name} className={t.on ? lit : cell}>
            <Icon size="h-[26px] w-[26px]"><g className="drop-shadow-[0_0_1px_#fff]">{t.art}</g></Icon>
          </button>
        ))}
      </div>
    </div>
  );
}

export default function App() {
  return (
    <div className="flex h-screen overflow-hidden bg-[#f3f6fb]">
      <Defs />
      <Sidebar />
      <main className="ml-[9px] mr-2 flex min-w-0 flex-1 flex-col bg-[#d6dee0] px-px">
        <Ribbon />
        <div role="tablist" className="flex shrink-0 pb-px pt-[5px] font-[Roboto] text-[15px]/6">
          <Tab label="Perspective" className="h-6 w-[98px] pb-0.5 pl-1.5" />
          <Tab label="Through Finger" className="h-6 w-[124px] pb-0.5 pl-1.5" />
          <Tab label="Side View" className="h-6 w-[85px] pb-0.5 pl-1.5" />
          <Tab label="Looking Down" active className="h-6 w-[118px] pb-0.5 pl-1.5" />
          <Tab label="New viewport" className="h-6 w-[39px] pl-1.5">
            <svg viewBox="0 0 12 12" fill="#fff" stroke="#6c7274" className="h-3 w-3"><path d="M4.5 1h3v3.500H11v3H7.500V11h-3V7.500H1v-3h3.500z" /></svg>
          </Tab>
        </div>
        <Viewport />
        <div className="-mx-px h-[7px] shrink-0 bg-[#f3f6fb]" />
      </main>
      <Recorder />
    </div>
  );
}
